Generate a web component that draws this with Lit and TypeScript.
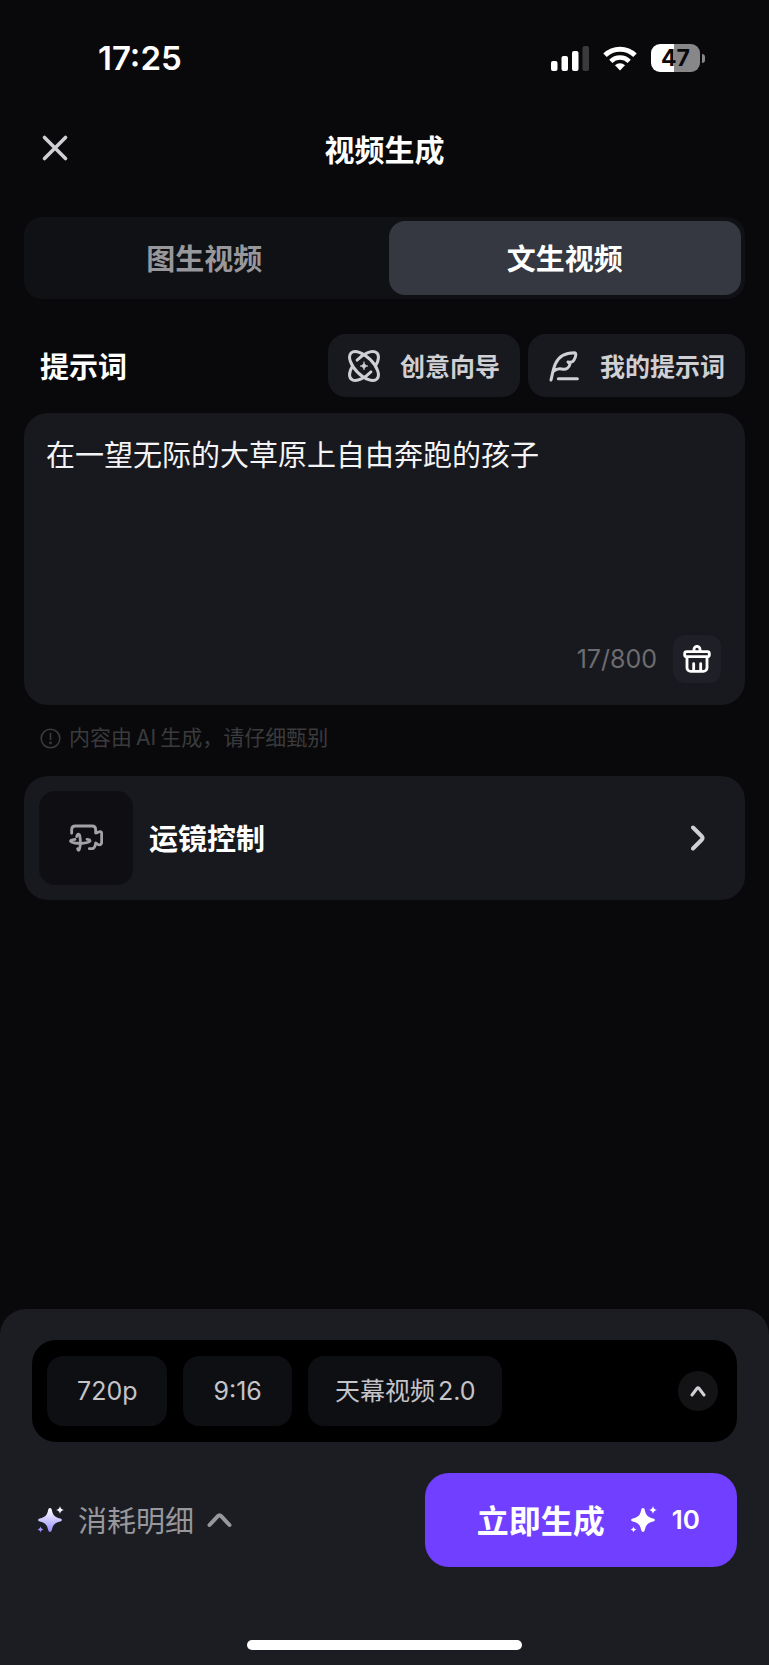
import { LitElement, html, css, svg } from "lit";
import { customElement, property, state } from "lit/decorators.js";
import { classMap } from "lit/directives/class-map.js";

const latinFont = css`Inter, "Noto Sans CJK SC", sans-serif`;
const hanFont = css`"Noto Sans CJK SC", Inter, sans-serif`;

const sparkleShapes = svg`
  <path d="M14 1.500c1 0 1.500.700 1.800 1.900 1.400 5.600 2.600 6.900 8.400 8.600 2.300.700 2.300 2.300 0 3-5.800 1.700-7 3-8.400 8.600-.6 2.500-3 2.500-3.600 0-1.400-5.600-2.600-6.900-8.400-8.600-2.300-.7-2.300-2.300 0-3 5.800-1.700 7-3 8.400-8.600.3-1.200.8-1.900 1.800-1.900z" transform="translate(0 .5)"/>
  <path d="M24 0c.8 2.700 1.300 3.200 4 4-2.700.8-3.200 1.300-4 4-.8-2.700-1.300-3.200-4-4 2.700-.8 3.200-1.300 4-4z"/>
  <path d="M4.500 20.500c.6 2 1 2.400 3 3-2 .6-2.400 1-3 3-.6-2-1-2.400-3-3 2-.6 2.400-1 3-3z"/>`;

@customElement("status-bar")
export class StatusBar extends LitElement {
  static styles = css`
    :host {
      display: flex;
      align-items: center;
      justify-content: space-between;
      height: 116px;
      padding: 0 64px 0 98px;
      box-sizing: border-box;
      font-family: ${latinFont};
    }
    .time {
      font-size: 33px;
      line-height: 40px;
      font-weight: 600;
    }
    .signals {
      display: flex;
      align-items: center;
      gap: 14px;
    }
    .battery {
      display: flex;
      align-items: center;
      gap: 2px;
    }
    .level {
      width: 49px;
      height: 28px;
      border-radius: 9px;
      background: linear-gradient(90deg, #fff 47%, #87878a 47%);
      color: #09090b;
      font-size: 23px;
      line-height: 28px;
      font-weight: 700;
      text-align: center;
    }
    .nub {
      width: 3px;
      height: 9px;
      border-radius: 0 4px 4px 0;
      background: #87878a;
    }
  `;

  render() {
    return html`
      <span class="time">17:25</span>
      <div class="signals">
        <svg width="38" height="25" viewBox="0 0 38 25" fill="#fff" aria-hidden="true">
          <rect x="0" y="15" width="6.500" height="10" rx="2" />
          <rect x="10.500" y="10" width="6.500" height="15" rx="2" />
          <rect x="21" y="5" width="6.500" height="20" rx="2" />
          <rect x="31.500" y="0" width="6.500" height="25" rx="2" fill="#3a3a3d" />
        </svg>
        <svg width="34" height="25" viewBox="0 0 34 25" fill="none" stroke="#fff" stroke-width="5" aria-hidden="true">
          <path d="M2 9.300a21.500 21.500 0 0 1 30 0" />
          <path d="M7.800 15.300a13.200 13.200 0 0 1 18.400 0" stroke-width="4.600" />
          <path d="M17 24.500l-5-5.200a7.200 7.200 0 0 1 10 0z" fill="#fff" stroke="none" />
        </svg>
        <div class="battery">
          <span class="level">47</span>
          <span class="nub"></span>
        </div>
      </div>
    `;
  }
}

@customElement("mode-tabs")
export class ModeTabs extends LitElement {
  static styles = css`
    :host {
      display: block;
    }
    .tabs {
      display: grid;
      grid-template-columns: 1fr 1fr;
      gap: 8px;
      padding: 4px;
      border-radius: 18px;
      background: #101114;
    }
    .tab {
      height: 74px;
      padding: 0 0 2px;
      border: 0;
      border-radius: 16px;
      background: none;
      color: #98989c;
      font: inherit;
      font-size: 29px;
      line-height: 40px;
      font-weight: 600;
      cursor: pointer;
    }
    .active {
      background: #363841;
      color: #fff;
    }
  `;

  @state() private selected = 1;
  private labels = ["图生视频", "文生视频"];

  render() {
    return html`
      <div class="tabs" role="tablist">
        ${this.labels.map(
          (label, i) => html`
            <button
              role="tab"
              aria-selected=${this.selected === i}
              class=${classMap({ tab: true, active: this.selected === i })}
              @click=${() => (this.selected = i)}
            >${label}</button>
          `
        )}
      </div>
    `;
  }
}

@customElement("prompt-editor")
export class PromptEditor extends LitElement {
  static styles = css`
    :host {
      display: block;
    }
    .bar {
      display: flex;
      align-items: center;
      gap: 8px;
      margin-bottom: 16px;
    }
    .label {
      flex: 1;
      padding: 0 0 2px 16px;
      font-size: 29px;
      line-height: 40px;
      font-weight: 700;
    }
    .tool {
      display: flex;
      align-items: center;
      gap: 20px;
      height: 63px;
      padding: 0 20px;
      border: 0;
      border-radius: 18px;
      background: #18191e;
      color: #cfcfd4;
      font: inherit;
      font-size: 25px;
      line-height: 36px;
      font-weight: 600;
      cursor: pointer;
    }
    .tool-label {
      padding-bottom: 2px;
    }
    .box {
      display: flex;
      flex-direction: column;
      padding: 20px 24px 22px 22px;
      border-radius: 24px;
      background: #18191e;
    }
    .text {
      height: 202px;
      padding: 0;
      border: 0;
      outline: 0;
      resize: none;
      background: none;
      color: #f4f4f6;
      font: inherit;
      font-size: 29px;
      line-height: 40px;
    }
    .foot {
      display: flex;
      align-items: center;
      justify-content: flex-end;
      gap: 16px;
    }
    .count {
      color: #6c6c71;
      font-family: ${latinFont};
      font-size: 25px;
      line-height: 36px;
    }
    .clear {
      display: grid;
      place-items: center;
      width: 48px;
      height: 48px;
      padding: 0;
      border: 0;
      border-radius: 12px;
      background: #1f1f27;
      cursor: pointer;
    }
  `;

  @state() private text = "在一望无际的大草原上自由奔跑的孩子";

  private onInput(e: Event) {
    this.text = (e.target as HTMLTextAreaElement).value;
  }

  render() {
    return html`
      <div class="bar">
        <label class="label" for="prompt">提示词</label>
        <button class="tool">
          <svg width="32" height="32" viewBox="0 0 32 32" fill="none" stroke="currentColor" stroke-width="3" stroke-linecap="round" aria-hidden="true">
            <ellipse cx="16" cy="16" rx="18.300" ry="9" transform="rotate(45 16 16)" />
            <g transform="translate(16 16) rotate(-45)">
              <path d="M-.6-9A18.300 9 0 0 1 8 8.100" />
              <path d="M.6 9A18.300 9 0 0 1-8-8.100" />
            </g>
            <path d="M16 12c.8 2.800 1.200 3.200 4 4-2.800.8-3.200 1.200-4 4-.8-2.800-1.200-3.200-4-4 2.800-.8 3.200-1.200 4-4z" fill="currentColor" stroke="currentColor" stroke-width=".6" />
          </svg>
          <span class="tool-label">创意向导</span>
        </button>
        <button class="tool">
          <svg width="32" height="32" viewBox="0 0 96 96" fill="none" stroke="currentColor" stroke-width="9" stroke-linecap="round" stroke-linejoin="round" aria-hidden="true">
            <path d="M9 90C13 73 16 55 22 42 32 18 54 8 80 8c6 0 3 14-2 22-3 5-9 8-18 6l6 6C64 51 56 60 42 57c-11-3-18 0-25 6" />
            <path d="M31 86h57" />
          </svg>
          <span class="tool-label">我的提示词</span>
        </button>
      </div>
      <div class="box">
        <textarea id="prompt" class="text" maxlength="800" spellcheck="false" .value=${this.text} @input=${this.onInput}></textarea>
        <div class="foot">
          <span class="count">${this.text.length}/800</span>
          <button class="clear" aria-label="清空" @click=${() => (this.text = "")}>
            <svg width="28" height="28" viewBox="0 0 84 84" fill="none" stroke="#fff" stroke-width="8.500" stroke-linecap="round" stroke-linejoin="round" aria-hidden="true">
              <path d="M33 19v-6a9 9 0 0 1 18 0v6" />
              <rect x="5" y="20" width="74" height="15" rx="6" />
              <path d="M12 37v31a11 11 0 0 0 11 11h38a11 11 0 0 0 11-11V37M32 56v20M53 56v20" />
            </svg>
          </button>
        </div>
      </div>
    `;
  }
}

@customElement("camera-row")
export class CameraRow extends LitElement {
  static styles = css`
    :host {
      display: block;
    }
    .row {
      display: flex;
      align-items: center;
      gap: 16px;
      width: 100%;
      padding: 15px;
      border: 0;
      border-radius: 24px;
      background: #18191e;
      color: #fff;
      font: inherit;
      font-size: 29px;
      line-height: 40px;
      font-weight: 600;
      text-align: left;
      cursor: pointer;
    }
    .thumb {
      display: grid;
      place-items: center;
      width: 94px;
      height: 94px;
      border-radius: 16px;
      background: #0e0e13;
    }
    .name {
      flex: 1;
      padding-bottom: 2px;
    }
    .arrow {
      margin-right: 25px;
    }
  `;

  render() {
    return html`
      <button class="row">
        <span class="thumb">
          <svg width="34" height="28" viewBox="0 0 102 84" fill="none" stroke="#a3a3a7" stroke-width="8.500" stroke-linecap="round" stroke-linejoin="round" aria-hidden="true">
            <path d="M8 28V17Q8 6 19 6h50q11 0 11 11v10q5 0 8-3 10-4 10 5v26q0 9-10 7l-8-5q-2 17-11 17h-8" />
            <path d="M18 46C0 48 0 54 18 57c16 2 40 1 45-6 0-3-4-5-9-5" />
            <path d="M23 38c3-10 9-10 10 2 2 14 1 28-2 36-2 4-4 4-5-2" />
          </svg>
        </span>
        <span class="name">运镜控制</span>
        <svg class="arrow" width="14" height="26" viewBox="0 0 14 26" fill="none" stroke="#cfcfd4" stroke-width="4" stroke-linecap="round" stroke-linejoin="round" aria-hidden="true">
          <path d="M2 2.500l8.500 8.500q2 2 0 4L2 23.500" />
        </svg>
      </button>
    `;
  }
}

@customElement("generate-sheet")
export class GenerateSheet extends LitElement {
  static styles = css`
    :host {
      display: flex;
      flex-direction: column;
      padding: 31px 32px 15px;
      border-radius: 26px 26px 0 0;
      background: #1c1d22;
    }
    button {
      border: 0;
      font: inherit;
      cursor: pointer;
    }
    .options {
      display: flex;
      align-items: center;
      gap: 16px;
      padding: 16px 19px 16px 15px;
      border-radius: 24px;
      background: #000;
    }
    .chip {
      height: 70px;
      padding: 0 30px;
      border-radius: 16px;
      background: #0e0f13;
      color: #c4c4c9;
      font-family: ${latinFont};
      font-size: 25px;
      line-height: 36px;
    }
    .model {
      padding: 0 27px;
    }
    .latin {
      padding-left: 3px;
    }
    .expand {
      display: grid;
      place-items: center;
      width: 40px;
      height: 40px;
      margin-left: auto;
      padding: 0;
      border-radius: 50%;
      background: #131316;
    }
    .actions {
      display: flex;
      align-items: center;
      justify-content: space-between;
      margin-top: 31px;
    }
    .detail {
      display: flex;
      align-items: center;
      gap: 13px;
      padding: 0 4px;
      background: none;
      color: #98989c;
      font-size: 29px;
      line-height: 40px;
    }
    .detail-label {
      padding-bottom: 2px;
    }
    .go {
      display: flex;
      align-items: center;
      gap: 14px;
      height: 94px;
      padding: 0 37px 0 52px;
      border-radius: 24px;
      background: #713fff;
      color: #fff;
      font-weight: 600;
      line-height: 40px;
    }
    .go-label {
      margin-right: 10px;
      padding-bottom: 2px;
      font-size: 32px;
    }
    .go-cost {
      font-family: ${latinFont};
      font-size: 26px;
    }
    .home {
      align-self: center;
      width: 39%;
      height: 10px;
      margin-top: 73px;
      border-radius: 5px;
      background: #fff;
    }
  `;

  @property({ type: Number }) cost = 10;

  render() {
    return html`
      <div class="options">
        <button class="chip">720p</button>
        <button class="chip">9:16</button>
        <button class="chip model">天幕视频<span class="latin">2.0</span></button>
        <button class="expand" aria-label="展开">
          <svg width="16" height="14" viewBox="0 0 16 14" fill="none" stroke="#cfcfd4" stroke-width="3" stroke-linecap="round" stroke-linejoin="round" aria-hidden="true">
            <path d="M2 11l4.900-6.500q1.100-1.400 2.200 0L14 11" />
          </svg>
        </button>
      </div>
      <div class="actions">
        <button class="detail">
          <svg width="29" height="28" viewBox="0 0 29 28" fill="url(#spark)" aria-hidden="true">
            <defs>
              <linearGradient id="spark" gradientUnits="userSpaceOnUse" x1="14" y1="2" x2="14" y2="27">
                <stop offset="0" stop-color="#fff" />
                <stop offset="1" stop-color="#8f84ff" />
              </linearGradient>
            </defs>
            ${sparkleShapes}
          </svg>
          <span class="detail-label">消耗明细</span>
          <svg width="25" height="16" viewBox="0 0 25 16" fill="none" stroke="#98989c" stroke-width="4" stroke-linecap="round" stroke-linejoin="round" aria-hidden="true">
            <path d="M2.500 13l8.300-8.800q1.700-1.700 3.400 0L22.500 13" />
          </svg>
        </button>
        <button class="go">
          <span class="go-label">立即生成</span>
          <svg width="29" height="28" viewBox="0 0 29 28" fill="#fff" aria-hidden="true">${sparkleShapes}</svg>
          <span class="go-cost">${this.cost}</span>
        </button>
      </div>
      <div class="home"></div>
    `;
  }
}

@customElement("app-root")
export class AppRoot extends LitElement {
  static styles = css`
    :host {
      display: flex;
      flex-direction: column;
      min-height: 100vh;
      background: #09090b;
      color: #fff;
      font-family: ${hanFont};
    }
    .head {
      display: grid;
      grid-template-columns: 1fr auto 1fr;
      align-items: center;
      height: 64px;
      padding: 0 40px;
    }
    .close {
      display: grid;
      justify-self: start;
      padding: 0;
      border: 0;
      background: none;
      cursor: pointer;
    }
    .title {
      margin: 0;
      font-size: 30px;
      line-height: 40px;
      font-weight: 600;
    }
    .main {
      display: flex;
      flex-direction: column;
      padding: 37px 24px;
    }
    .editor {
      margin-top: 35px;
    }
    .note {
      display: flex;
      align-items: center;
      gap: 8px;
      height: 30px;
      margin: 18px 0 23px;
      padding-left: 16px;
      color: #3b3b3e;
      font-family: ${latinFont};
      font-size: 21px;
      line-height: 30px;
    }
    .latin {
      padding: 0 4px;
    }
    .sheet {
      margin-top: auto;
    }
  `;

  render() {
    return html`
      <status-bar></status-bar>
      <header class="head">
        <button class="close" aria-label="关闭">
          <svg width="30" height="30" viewBox="0 0 30 30" fill="none" stroke="#cfcfd4" stroke-width="3.600" stroke-linecap="round" aria-hidden="true">
            <path d="M4.500 4.500l21 21M25.500 4.500l-21 21" />
          </svg>
        </button>
        <h1 class="title">视频生成</h1>
      </header>
      <main class="main">
        <mode-tabs></mode-tabs>
        <prompt-editor class="editor"></prompt-editor>
        <p class="note">
          <svg width="21" height="21" viewBox="0 0 21 21" fill="none" stroke="currentColor" stroke-width="1.600" stroke-linecap="round" aria-hidden="true">
            <circle cx="10.500" cy="10.500" r="9.300" />
            <path d="M10.500 5.500v6" />
            <circle cx="10.500" cy="15" r=".6" fill="currentColor" />
          </svg>
          <span>内容由<span class="latin">AI</span>生成，请仔细甄别</span>
        </p>
        <camera-row></camera-row>
      </main>
      <generate-sheet class="sheet"></generate-sheet>
    `;
  }
}
